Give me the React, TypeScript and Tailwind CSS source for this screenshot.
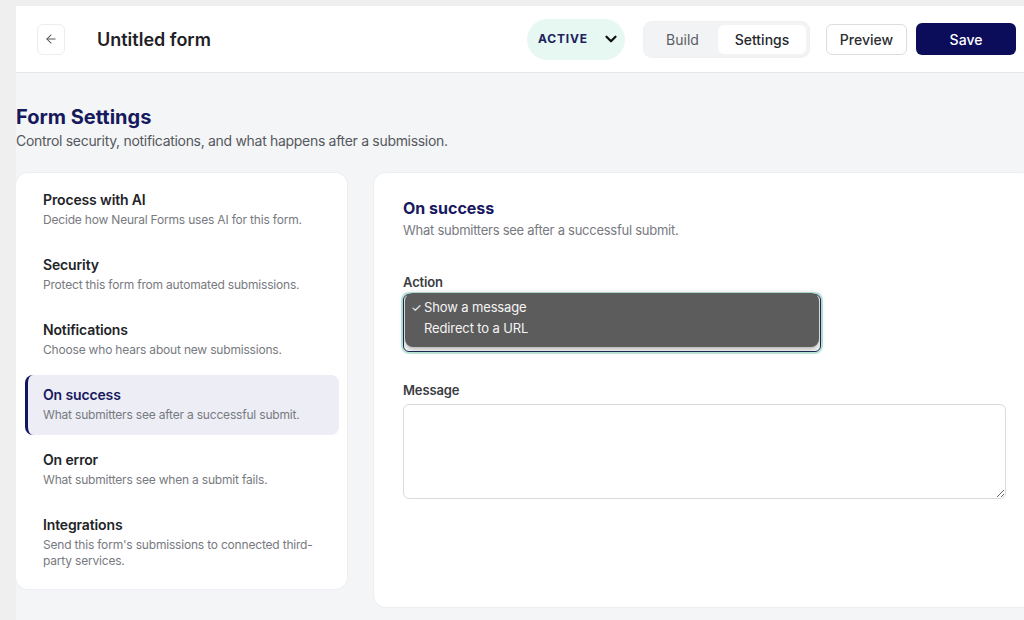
import { ArrowLeft, ChevronDown } from 'lucide-react';

interface SettingsSection {
  id: string;
  title: string;
  description: string;
}

const sections: SettingsSection[] = [
  { id: 'ai', title: 'Process with AI', description: 'Decide how Neural Forms uses AI for this form.' },
  { id: 'security', title: 'Security', description: 'Protect this form from automated submissions.' },
  { id: 'notifications', title: 'Notifications', description: 'Choose who hears about new submissions.' },
  { id: 'success', title: 'On success', description: 'What submitters see after a successful submit.' },
  { id: 'error', title: 'On error', description: 'What submitters see when a submit fails.' },
  { id: 'integrations', title: 'Integrations', description: "Send this form's submissions to connected third-party services." },
];

function Header() {
  return (
    <header className="flex h-[67px] items-center border-b border-[#e6e7ea] bg-white pl-[21px] pr-[8px]">
      <button
        className="flex h-[31px] w-[28px] items-center justify-center rounded-md border border-[#ededed] text-[#555]"
        aria-label="Back"
      >
        <ArrowLeft className="h-[14px] w-[14px]" strokeWidth={1.75} />
      </button>
      <h1 className="ml-[32px] text-[18px] font-semibold text-[#1f2125]">Untitled form</h1>

      <div className="ml-auto flex items-center">
        {/* status pill */}
        <button className="flex h-[41px] w-[98px] items-center rounded-full bg-[#e6f8f1] pl-[11px]">
          <span className="text-[12px] font-bold tracking-[0.07em] text-[#1d2160]">ACTIVE</span>
          <ChevronDown className="ml-[14px] h-[18px] w-[18px] text-[#111]" strokeWidth={3} />
        </button>

        {/* tabs */}
        <div className="ml-[19px] flex h-[35px] w-[165px] items-center rounded-lg bg-[#f2f3f5] p-[3px] shadow-[0_0_0_1px_#eef0f2]">
          <button className="flex h-full w-[71px] items-center justify-center text-[14px] text-[#5b5e63]">
            Build
          </button>
          <button className="flex h-full w-[88px] items-center justify-center rounded-md bg-white text-[14px] font-medium text-[#26282c]">
            Settings
          </button>
        </div>

        <button className="ml-[17px] h-[31px] w-[81px] rounded-md border border-[#dcdde0] bg-white text-[14px] font-medium text-[#2b2d31]">
          Preview
        </button>
        <button className="ml-[9px] h-[32px] w-[100px] rounded-md bg-[#0b0d5b] text-[14px] font-medium text-white">
          Save
        </button>
      </div>
    </header>
  );
}

function SectionNav({ activeId }: { activeId: string }) {
  return (
    <nav className="flex w-[331px] shrink-0 flex-col gap-[5px] self-start rounded-xl bg-white pb-[8px] pl-[9px] pr-[8px] pt-[7px] shadow-[0_0_0_1px_#eceef1]">
      {sections.map((s) => {
        const active = s.id === activeId;
        return (
          <div
            key={s.id}
            className={`rounded-lg pb-[12px] pr-[14px] pt-[10px] ${
              active ? 'border-l-[3px] border-[#12155e] bg-[#ecedf5] pl-[15px]' : 'pl-[18px]'
            }`}
          >
            <div
              className={`text-[14px] font-semibold leading-5 tracking-[-0.01em] ${
                active ? 'text-[#17195f]' : 'text-[#222428]'
              }`}
            >
              {s.title}
            </div>
            <div className="mt-[2px] text-[12px] leading-4 tracking-[-0.016em] text-[#777a80]">{s.description}</div>
          </div>
        );
      })}
    </nav>
  );
}

function SuccessPanel() {
  return (
    <section className="h-[434px] w-[660px] shrink-0 rounded-xl bg-white pl-[29px] pr-[28px] pt-[23px] shadow-[0_0_0_1px_#eceef1]">
      <h2 className="text-[16px] font-bold leading-6 text-[#17195f]">On success</h2>
      <p className="mt-px text-[13px] leading-[18px] tracking-[-0.02em] text-[#777a80]">
        What submitters see after a successful submit.
      </p>

      <label className="mt-[34px] block text-[13px] font-semibold leading-[18px] tracking-[-0.01em] text-[#3a3c41]">
        Action
      </label>
      <div className="relative mt-[3px] w-[418px]">
        <div className="h-[58px] w-full rounded-md border border-[#1f2a5a] bg-white shadow-[0_0_0_2px_#bfe9dd]" />
        {/* open native-style menu */}
        <div className="absolute left-[2px] right-[2px] top-[-1px] flex h-[54px] flex-col rounded-lg bg-[#5c5c5c] pt-[4px] text-[13px] leading-[21px] tracking-[-0.01em] text-[#f4f4f4] shadow-[0_2px_6px_rgba(0,0,0,0.35)]">
          <div className="flex pl-[6px]">
            <span className="w-[13px] text-[12px]">✓</span>
            <span>Show a message</span>
          </div>
          <div className="pl-[19px]">Redirect to a URL</div>
        </div>
      </div>

      <label className="mt-[29px] block text-[13px] font-semibold leading-[18px] tracking-[-0.01em] text-[#3a3c41]">
        Message
      </label>
      <textarea className="mt-[5px] block h-[95px] w-full resize-y rounded-md border border-[#d9dadd] bg-white p-2 text-[13px] outline-none" />
    </section>
  );
}

export default function App() {
  return (
    <div className="h-[620px] w-[1024px] overflow-hidden bg-[#efefef] pl-[16px] pt-[6px] font-['Inter','Noto_Sans',sans-serif]">
      <div className="h-full overflow-hidden bg-[#f4f5f7]">
        <Header />
        <main className="pt-[30px]">
          <h1 className="text-[20px] font-bold leading-7 text-[#16195c]">Form Settings</h1>
          <p className="text-[14px] leading-5 tracking-[-0.022em] text-[#55585e]">
            Control security, notifications, and what happens after a submission.
          </p>
          <div className="mt-[22px] flex gap-[27px]">
            <SectionNav activeId="success" />
            <SuccessPanel />
          </div>
        </main>
      </div>
    </div>
  );
}
